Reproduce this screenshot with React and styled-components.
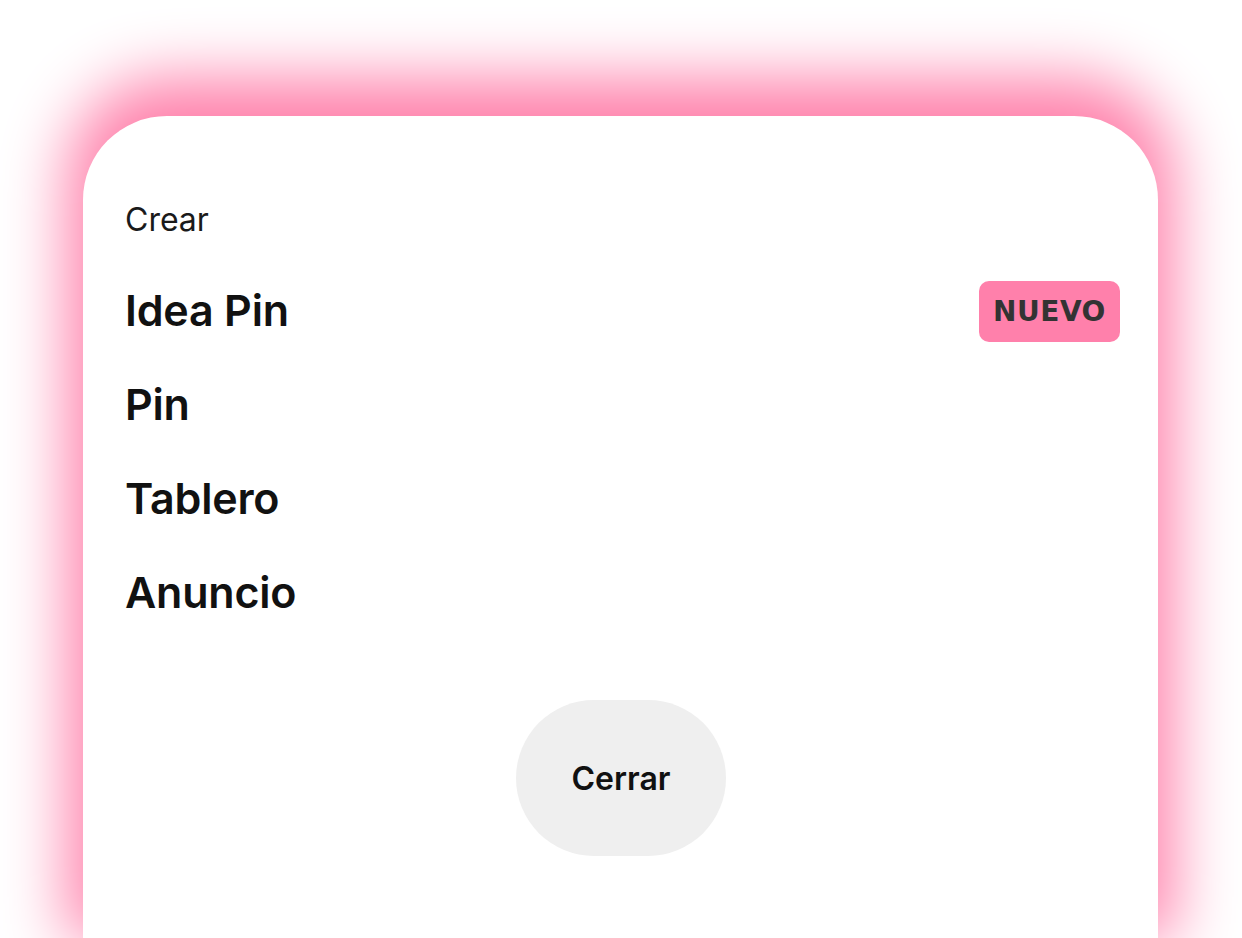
import React from "react";
import styled, { createGlobalStyle } from "styled-components";

const Global = createGlobalStyle`
  html, body {
    margin: 0;
    padding: 0;
    background: #ffffff;
    overflow: hidden;
    height: 100%;
  }
  #root {
    height: 100%;
  }
`;

const Stage = styled.div`
  height: 938px;
  overflow: hidden;
  padding: 116px 84px 0 83px;
  box-sizing: border-box;
  background: #ffffff;
`;

const Sheet = styled.div`
  position: relative;
  height: 830px;
  background: #ffffff;
  border-radius: 84px 84px 0 0;
  box-shadow: 0 -22px 64px 16px #ff80ab;
  padding: 84px 38px 0 42px;
  box-sizing: border-box;
  display: flex;
  flex-direction: column;
  font-family: Inter, "Liberation Sans", sans-serif;
  color: #111111;
`;

const Heading = styled.div`
  font-size: 32px;
  line-height: 40px;
  font-weight: 400;
  color: #1a1a1a;
  margin-bottom: 23px;
`;

const Menu = styled.ul`
  list-style: none;
  margin: 0;
  padding: 0;
  display: flex;
  flex-direction: column;
`;

const Item = styled.li`
  height: 94px;
  display: flex;
  align-items: center;
  justify-content: space-between;
`;

const Label = styled.span`
  font-size: 43px;
  line-height: 43px;
  font-weight: 600;
  letter-spacing: -0.2px;
`;

const Badge = styled.span`
  display: inline-flex;
  align-items: center;
  justify-content: center;
  width: 141px;
  height: 61px;
  margin-top: 3px;
  border-radius: 10px;
  background: #ff80ab;
  color: #333333;
  font-family: "DejaVu Sans", "Liberation Sans", sans-serif;
  font-weight: 700;
  font-size: 28px;
  letter-spacing: 0.5px;
`;

const Footer = styled.div`
  display: flex;
  justify-content: center;
  margin-top: 61px;
`;

const CloseButton = styled.button`
  width: 210px;
  height: 156px;
  border: none;
  border-radius: 78px;
  background: #efefef;
  color: #111111;
  font-family: Inter, "Liberation Sans", sans-serif;
  font-size: 32px;
  font-weight: 600;
  cursor: pointer;
  margin-left: -3px;
`;

const items = [
  { label: "Idea Pin", badge: "NUEVO" },
  { label: "Pin" },
  { label: "Tablero" },
  { label: "Anuncio" },
];

export default function App() {
  return (
    <>
      <Global />
      <Stage>
        <Sheet>
          <Heading>Crear</Heading>
          <Menu>
            {items.map((it) => (
              <Item key={it.label}>
                <Label>{it.label}</Label>
                {it.badge && <Badge>{it.badge}</Badge>}
              </Item>
            ))}
          </Menu>
          <Footer>
            <CloseButton>Cerrar</CloseButton>
          </Footer>
        </Sheet>
      </Stage>
    </>
  );
}
